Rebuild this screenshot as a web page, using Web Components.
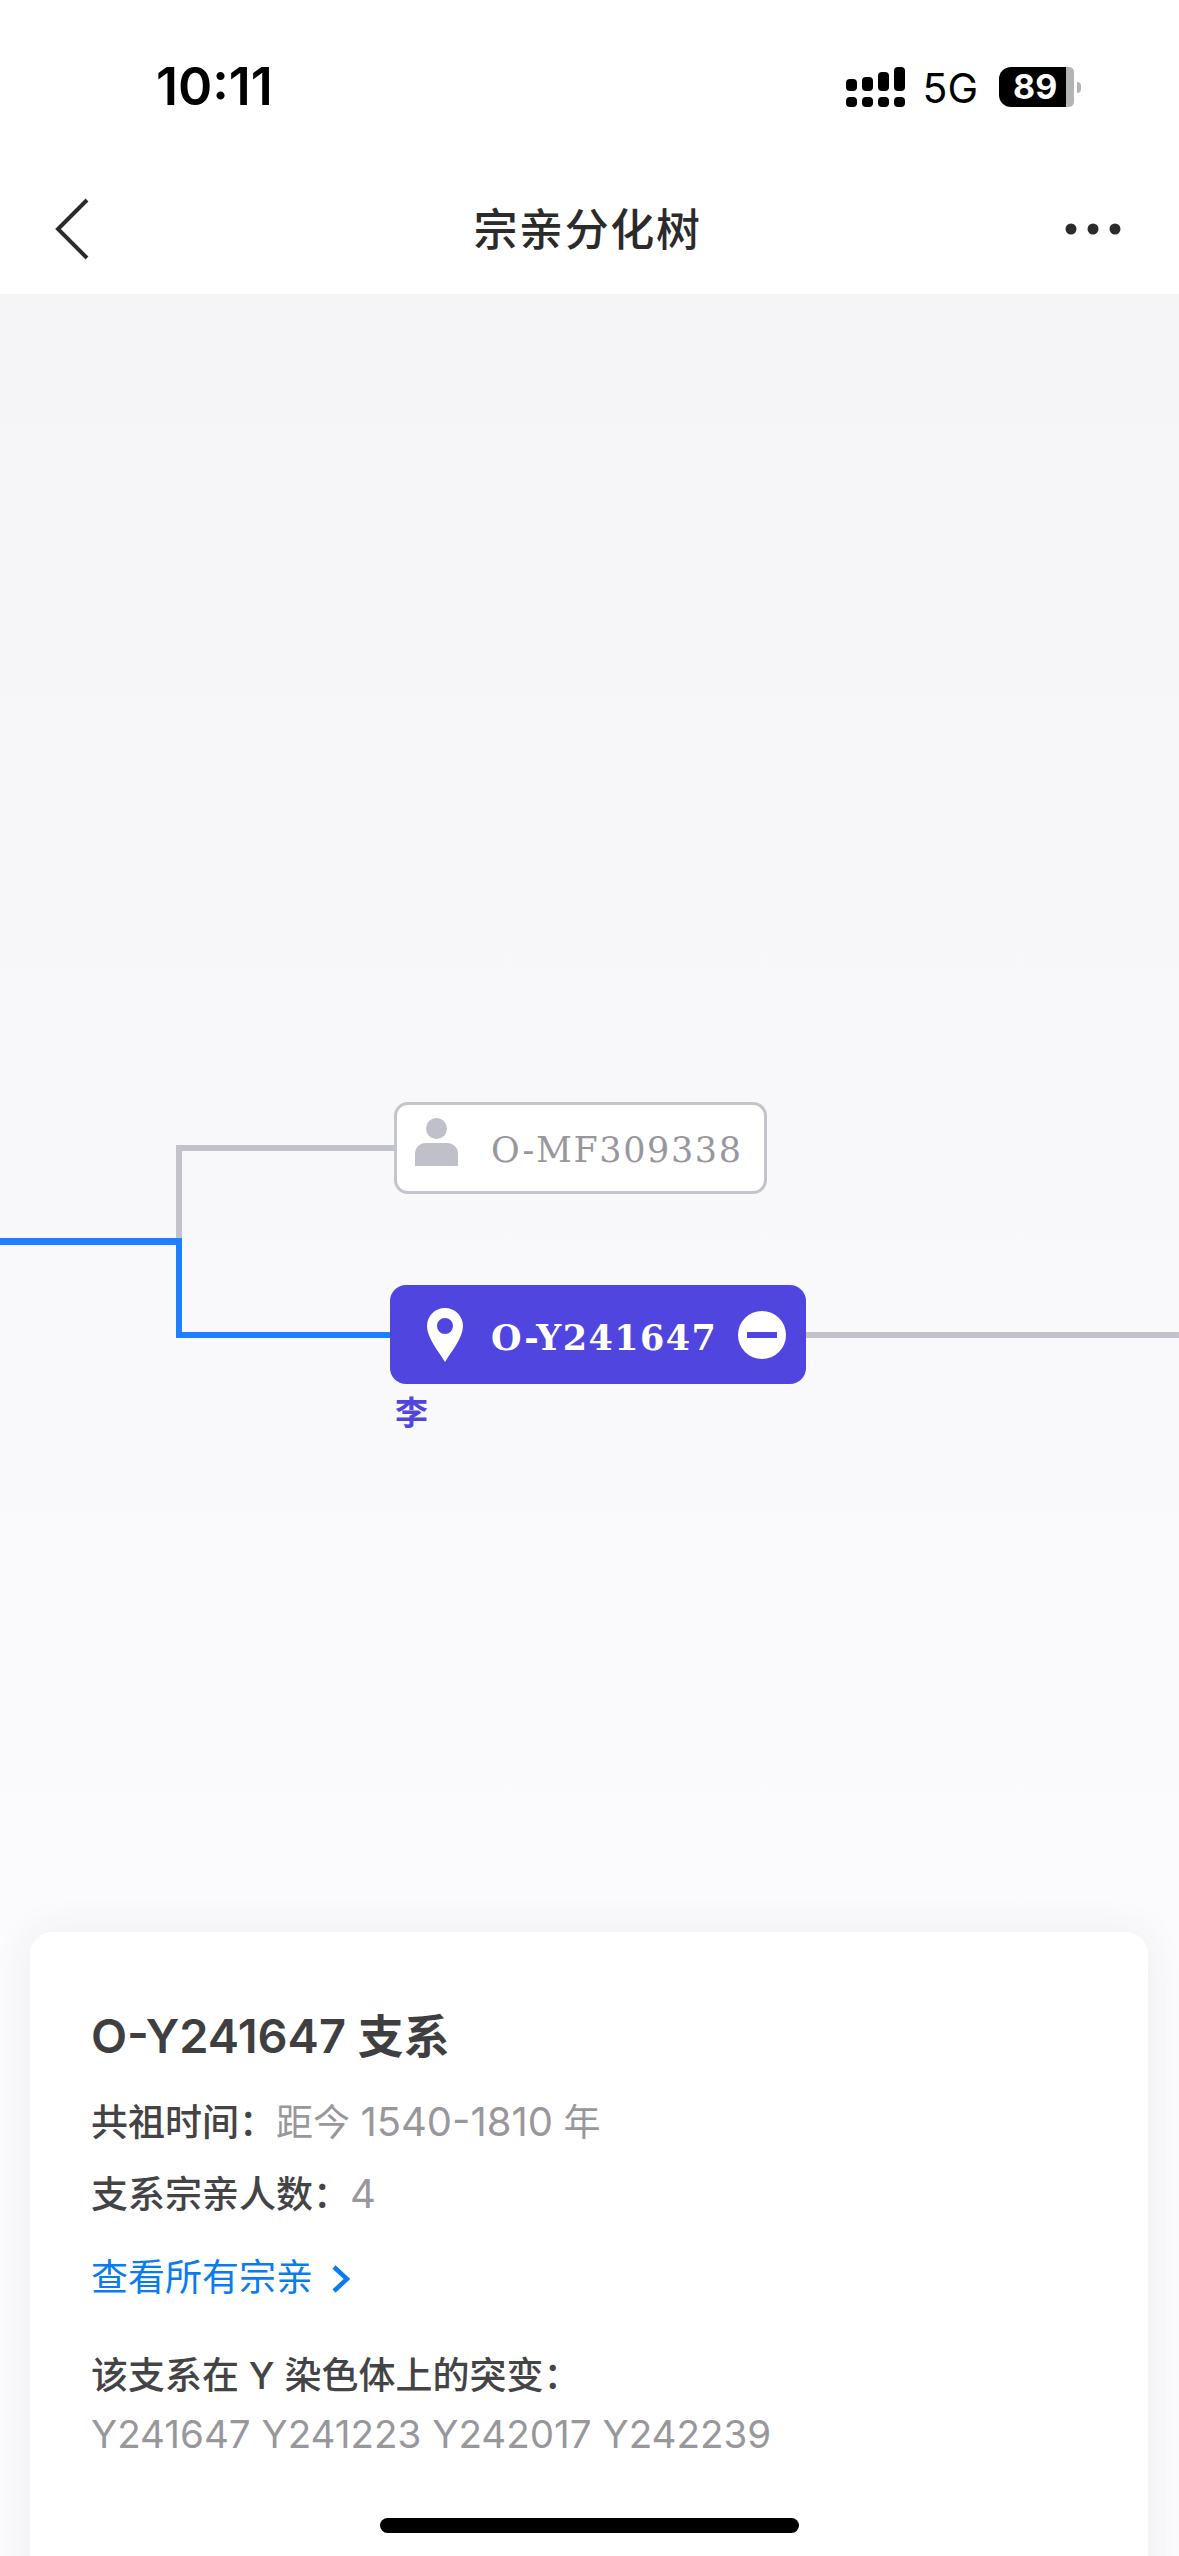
<!DOCTYPE html>
<html lang="zh">
<head>
<meta charset="utf-8">
<title>宗亲分化树</title>
<style>
  html, body { margin: 0; padding: 0; background: #fff; }
  body { width: 1179px; height: 2556px; overflow: hidden; font-family: Inter, "Noto Sans CJK SC", sans-serif; }
  app-page { width: 1179px; height: 2556px; }
  .num { font-size: 40px; }
</style>
</head>
<body>
<app-page>
  <status-bar slot="top" time="10:11" level="89"></status-bar>
  <nav-bar slot="top">宗亲分化树</nav-bar>
  <tree-canvas slot="canvas"></tree-canvas>
  <info-card slot="card" name="O-Y241647" suffix="支系">
    <info-row label="共祖时间：">距今 <span class="num">1540-1810</span> 年</info-row>
    <info-row label="支系宗亲人数："><span class="num">4</span></info-row>
  </info-card>
</app-page>

<script>
class AppPage extends HTMLElement {
  constructor() {
    super();
    this.attachShadow({mode: 'open'}).innerHTML = `
      <style>
        :host { display: flex; flex-direction: column; position: relative; overflow: hidden;
          background: linear-gradient(#f5f5f7 294px, #f8f8fa 1100px, #fbfbfd 1930px); }
        ::slotted(*) { flex: none; }
        .bar { position: absolute; left: 380px; top: 2518px; width: 419px; height: 15px;
          border-radius: 8px; background: #000; }
      </style>
      <slot name="top"></slot>
      <slot name="canvas"></slot>
      <slot name="card"></slot>
      <div class="bar"></div>`;
  }
}

class StatusBar extends HTMLElement {
  constructor() {
    super();
    const time = this.getAttribute('time');
    const level = this.getAttribute('level');
    this.attachShadow({mode: 'open'}).innerHTML = `
      <style>
        :host { display: flex; align-items: center; height: 174px; box-sizing: border-box;
          padding: 0 105px 0 156px; background: #fff; color: #000; }
        .time { font: 600 52px/1 Inter, sans-serif; letter-spacing: 0; }
        .right { margin-left: auto; display: flex; align-items: center; }
        .net { font: 400 41px/1 Inter, sans-serif; margin: 2px 21px 0 16px; }
        .batt { position: relative; width: 75px; height: 40px; border-radius: 12px 5px 5px 12px;
          background: linear-gradient(90deg, #000 67px, #b4b4b4 67px); color: #fff;
          font: 700 34px/40px Inter, sans-serif; padding-left: 14px; box-sizing: border-box; }
        .batt i { position: absolute; left: 78px; top: 15px; width: 4px; height: 11px;
          background: #b4b4b4; border-radius: 0 5px 5px 0; }
        svg { display: block; }
      </style>
      <span class="time">${time}</span>
      <div class="right">
        <svg width="60" height="40" viewBox="0 0 60 40">
          <g fill="#000">
            <rect x="0" y="12" width="11" height="12" rx="4"/><rect x="16" y="10" width="11" height="14" rx="4"/>
            <rect x="32" y="5" width="11" height="19" rx="4"/><rect x="48" y="0" width="11" height="24" rx="4"/>
            <rect x="0" y="30" width="11" height="10" rx="4"/><rect x="16" y="30" width="11" height="10" rx="4"/>
            <rect x="32" y="30" width="11" height="10" rx="4"/><rect x="48" y="30" width="11" height="10" rx="4"/>
          </g>
        </svg>
        <span class="net">5G</span>
        <div class="batt">${level}<i></i></div>
      </div>`;
  }
}

class NavBar extends HTMLElement {
  constructor() {
    super();
    this.attachShadow({mode: 'open'}).innerHTML = `
      <style>
        :host { display: grid; grid-template-columns: 1fr auto 1fr; align-items: center; height: 120px;
          box-sizing: border-box; padding: 0 58px 10px 54px; background: #fff; color: #2b2b2b; }
        .title { font: 500 44px/1 "Noto Sans CJK SC", sans-serif; letter-spacing: 1.6px; margin-bottom: 4px; }
        svg { display: block; }
        .more { justify-self: end; }
      </style>
      <svg width="36" height="62" viewBox="0 0 36 62"><path d="M33 2 L4 31 L33 60" fill="none" stroke="#2b2b2b" stroke-width="4"/></svg>
      <span class="title"><slot></slot></span>
      <svg class="more" width="56" height="12" viewBox="0 0 56 12" fill="#2b2b2b">
        <circle cx="6" cy="6" r="5.5"/><circle cx="28" cy="6" r="5.5"/><circle cx="50" cy="6" r="5.5"/>
      </svg>`;
  }
}

class TreeNode extends HTMLElement {
  constructor() {
    super();
    const code = this.getAttribute('code');
    const active = this.hasAttribute('active');
    const icon = active
      ? `<svg class="ic" width="36" height="54" viewBox="0 0 36 54"><path fill-rule="evenodd" fill="#fff" d="M18 0C8 0 0 8 0 18C0 30 12 44 18 54C24 44 36 30 36 18C36 8 28 0 18 0ZM18 10a8 8 0 1 1 0 16a8 8 0 1 1 0-16Z"/></svg>`
      : `<svg class="ic" width="43" height="48" viewBox="0 0 43 48" fill="#c0c0ca"><ellipse cx="21.5" cy="10.5" rx="10.5" ry="10.5"/><path d="M0 48V36C0 29 5 25 11 25H32C38 25 43 29 43 36V48Z"/></svg>`;
    const toggle = active
      ? `<svg class="toggle" width="48" height="48" viewBox="0 0 48 48"><circle cx="24" cy="24" r="24" fill="#fff"/><rect x="9" y="21" width="30" height="6" fill="#5145e0"/></svg>`
      : '';
    this.attachShadow({mode: 'open'}).innerHTML = `
      <style>
        :host { display: flex; position: absolute; align-items: center; box-sizing: border-box; }
        .code { font-family: "DejaVu Serif", serif; font-size: 35px; line-height: 1; white-space: nowrap; }
        svg { display: block; flex: none; }
        :host([active]) { width: 416px; height: 99px; border-radius: 16px; background: #5145e0; color: #fff; padding-left: 37px; }
        :host([active]) .code { font-weight: 700; margin-left: 28px; margin-top: 6px; letter-spacing: 1.4px; }
        :host([active]) .toggle { position: absolute; left: 348px; top: 26px; }
        :host(:not([active])) { width: 373px; height: 92px; border-radius: 14px; background: #fff;
          border: 3px solid #c4c4cc; color: #98989c; padding-left: 18px; }
        :host(:not([active])) .ic { margin-top: -12px; }
        :host(:not([active])) .code { margin-left: 33px; margin-top: 5px; letter-spacing: 1.6px; }
      </style>
      ${icon}<span class="code">${code}</span>${toggle}`;
  }
}

class TreeCanvas extends HTMLElement {
  constructor() {
    super();
    this.attachShadow({mode: 'open'}).innerHTML = `
      <style>
        :host { display: block; position: relative; height: 1638px; }
        .ln { position: absolute; }
        .g { background: #c2c2cb; }
        .b { background: #1f80ff; }
        .who { position: absolute; left: 395px; top: 1098px; font: 700 33px/1.2 "Noto Sans CJK SC", sans-serif; color: #5145e0; }
        tree-node.top { left: 394px; top: 808px; }
        tree-node.cur { left: 390px; top: 991px; }
      </style>
      <div class="ln g" style="left:176px;top:851px;width:218px;height:6px"></div>
      <div class="ln g" style="left:176px;top:851px;width:6px;height:94px"></div>
      <div class="ln b" style="left:0;top:944px;width:182px;height:7px"></div>
      <div class="ln b" style="left:176px;top:944px;width:6px;height:100px"></div>
      <div class="ln b" style="left:176px;top:1038px;width:214px;height:6px"></div>
      <div class="ln g" style="left:806px;top:1038px;width:373px;height:6px"></div>
      <tree-node class="top" code="O-MF309338"></tree-node>
      <tree-node class="cur" code="O-Y241647" active></tree-node>
      <span class="who">李</span>`;
  }
}

class InfoRow extends HTMLElement {
  constructor() {
    super();
    this.attachShadow({mode: 'open'}).innerHTML = `
      <style>
        :host { display: block; font-size: 37px; line-height: 71px; color: #98989c; white-space: nowrap; }
        b { font-weight: 500; color: #444447; }
      </style>
      <b>${this.getAttribute('label')}</b><slot></slot>`;
  }
}

class InfoCard extends HTMLElement {
  constructor() {
    super();
    this.attachShadow({mode: 'open'}).innerHTML = `
      <style>
        :host { display: block; box-sizing: border-box; width: 1118px; height: 700px; margin-left: 30px;
          padding: 72px 62px 0 61px; border-radius: 22px; background: #fff;
          box-shadow: 0 0 40px rgba(60, 60, 90, .07);
          font-family: Inter, "Noto Sans CJK SC", sans-serif; }
        h2 { margin: 0 0 18px; font-size: 47px; line-height: 64px; font-weight: 600; color: #3f3f42; }
        h2 span { font-size: 46px; }
        .link { display: flex; align-items: center; gap: 18px; margin-top: 22px; font-size: 37px; line-height: 52px; color: #0a7cf0; }
        .link svg { display: block; margin-top: 2px; }
        h3 { margin: 46px 0 0; font-size: 37px; line-height: 52px; font-weight: 500; color: #444447; }
        p { margin: 6px 0 0; font-size: 38.6px; line-height: 52px; color: #98989c; }
      </style>
      <h2>${this.getAttribute('name')} <span>${this.getAttribute('suffix')}</span></h2>
      <slot></slot>
      <div class="link">查看所有宗亲
        <svg width="20" height="28" viewBox="0 0 20 28"><path d="M3 2 L16 14 L3 26" fill="none" stroke="#0a7cf0" stroke-width="4.5"/></svg>
      </div>
      <h3>该支系在 Y 染色体上的突变：</h3>
      <p>Y241647 Y241223 Y242017 Y242239</p>`;
  }
}

customElements.define('app-page', AppPage);
customElements.define('status-bar', StatusBar);
customElements.define('nav-bar', NavBar);
customElements.define('tree-node', TreeNode);
customElements.define('tree-canvas', TreeCanvas);
customElements.define('info-row', InfoRow);
customElements.define('info-card', InfoCard);
</script>
</body>
</html>
